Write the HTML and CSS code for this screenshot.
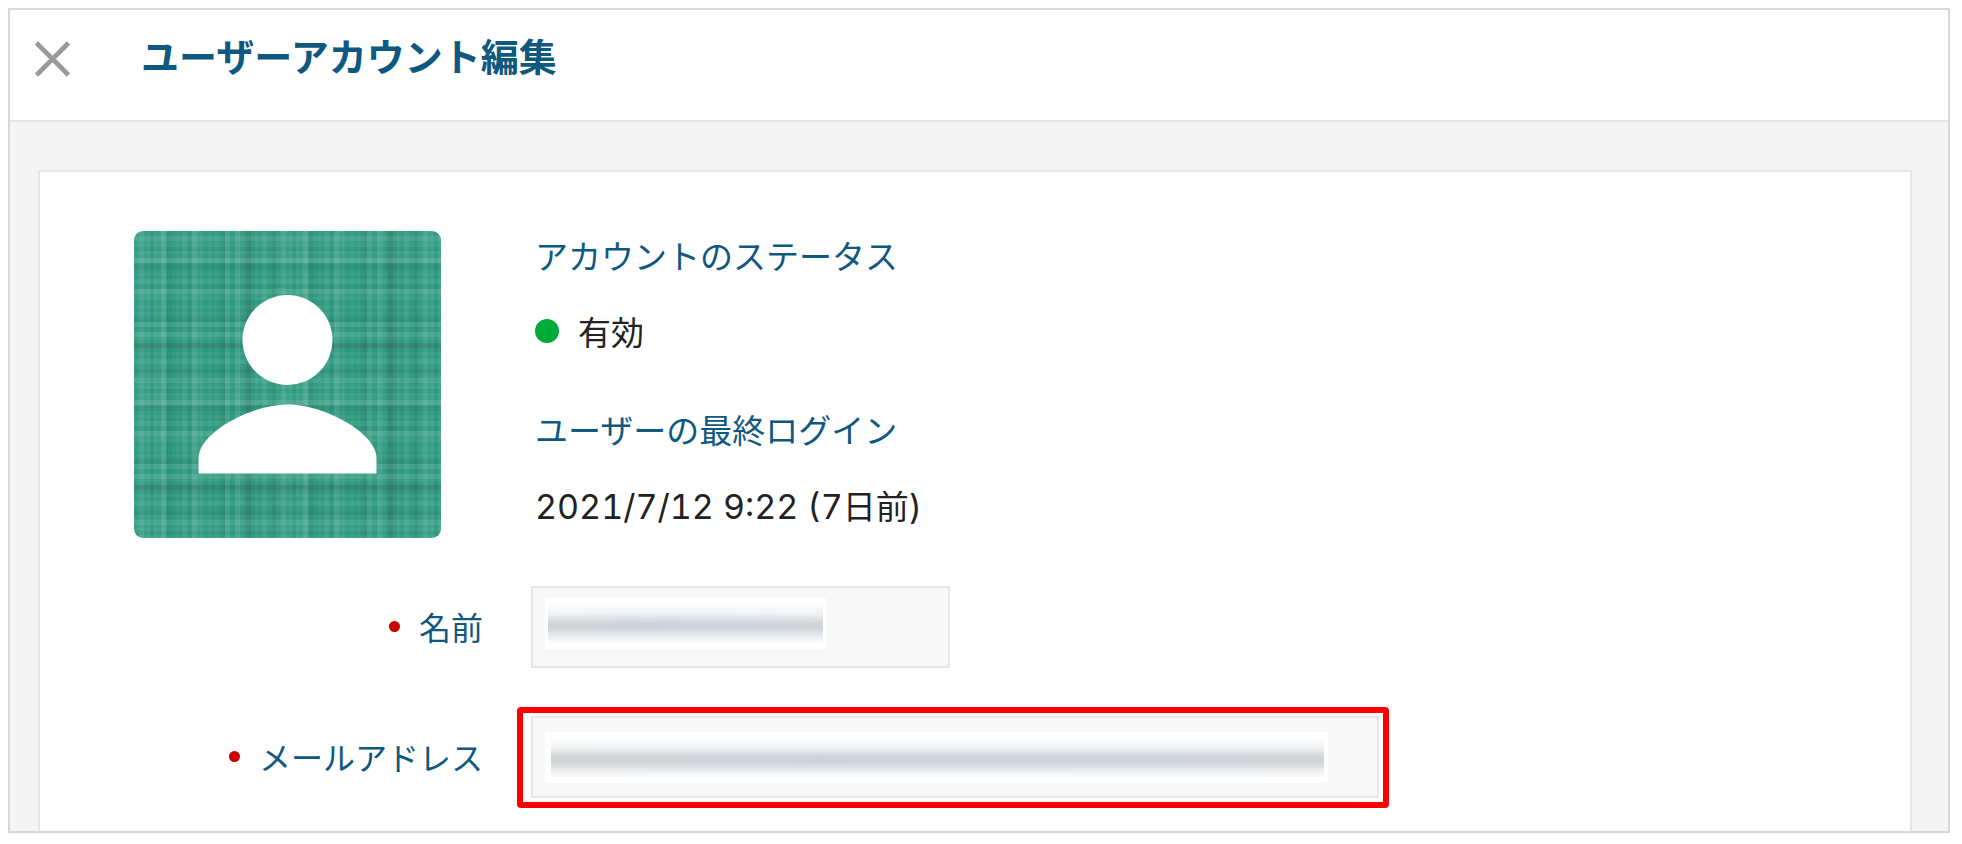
FILE: index.html
```html
<!DOCTYPE html>
<html lang="ja">
	<head>
		<meta charset="utf-8">
		<meta name="viewport" content="width=device-width, initial-scale=1">
		<title>ユーザーアカウント編集</title>
		<link rel="stylesheet" href="styles.css">
	</head>
	<body>
		<div class="dialog">
			<header class="dialog-header">
				<button class="close" type="button" aria-label="閉じる">
					<svg width="36" height="36" viewBox="0 0 36 36"><path d="M1.500 2L33.500 34M33.500 2L1.500 34" fill="none" stroke="#999" stroke-width="4.600"/></svg>
				</button>
				<h1 class="title">ユーザーアカウント編集</h1>
			</header>
			<main class="dialog-body">
				<form class="card">
					<div class="avatar">
						<svg width="307" height="307" viewBox="0 0 307 307" aria-hidden="true">
							<defs>
								<!-- one set of threads, used for both directions -->
								<g id="threads">
									<g fill="#fff">
										<rect x="0" width="5" height="142" opacity=".03"/>
										<rect x="5" width="5" height="142" opacity=".11"/>
										<rect x="10" width="3" height="142" opacity=".04"/>
										<rect x="13" width="3" height="142" opacity=".07"/>
										<rect x="20" width="3" height="142" opacity=".07"/>
										<rect x="23" width="4" height="142" opacity=".04"/>
										<rect x="27" width="5" height="142" opacity=".14"/>
										<rect x="42" width="3" height="142" opacity=".03"/>
										<rect x="48" width="5" height="142" opacity=".07"/>
										<rect x="58" width="5" height="142" opacity=".12"/>
										<rect x="63" width="3" height="142" opacity=".04"/>
										<rect x="66" width="3" height="142" opacity=".07"/>
										<rect x="74" width="4" height="142" opacity=".04"/>
										<rect x="81" width="3" height="142" opacity=".04"/>
										<rect x="91" width="5" height="142" opacity=".09"/>
										<rect x="101" width="5" height="142" opacity=".11"/>
										<rect x="106" width="3" height="142" opacity=".04"/>
										<rect x="121" width="3" height="142" opacity=".04"/>
										<rect x="128" width="5" height="142" opacity=".08"/>
									</g>
									<g fill="#3c4a48">
										<rect x="33" width="5" height="142" opacity=".1"/>
										<rect x="54" width="3" height="142" opacity=".04"/>
										<rect x="87" width="4" height="142" opacity=".1"/>
										<rect x="112" width="5" height="142" opacity=".22"/>
										<rect x="117" width="3" height="142" opacity=".05"/>
										<rect x="138" width="4" height="142" opacity=".1"/>
									</g>
								</g>
								<pattern id="plaid" width="142" height="142" patternUnits="userSpaceOnUse">
									<rect width="142" height="142" fill="#2d997f"/>
									<use href="#threads"/>
									<use href="#threads" transform="matrix(0 1 1 0 0 0)"/>
								</pattern>
							</defs>
							<rect width="307" height="307" rx="9" fill="url(#plaid)"/>
							<circle cx="153.500" cy="109" r="45" fill="#fff"/>
							<path d="M64.500 242.500V227C64.500 202 117 173.500 153.500 173.500S242.500 202 242.500 227V242.500Z" fill="#fff"/>
						</svg>
					</div>
					<dl class="info">
						<dt>アカウントのステータス</dt>
						<dd class="status"><span class="status-dot"></span>有効</dd>
						<dt>ユーザーの最終ログイン</dt>
						<dd><span class="num">2021/7/12 9:22 (7</span>日前<span class="num">)</span></dd>
					</dl>

					<label class="label required" for="name">名前</label>
					<div class="field field-name">
						<input class="input" id="name" type="text">
						<span class="masked"></span>
					</div>

					<label class="label required" for="email">メールアドレス</label>
					<div class="field field-email">
						<input class="input" id="email" type="email">
						<span class="masked"></span>
						<span class="highlight"></span>
					</div>
				</form>
			</main>
		</div>
	</body>
</html>
```
FILE: styles.css
```css
* { box-sizing: border-box; }

body {
	margin: 0;
	padding: 8px 12px 12px 8px;
	background: #fff;
	color: #222;
	font-family: "Noto Sans CJK JP", sans-serif;
	font-size: 33px;
	line-height: 48px;
}

.dialog { border: 2px solid #d8d8d8; }

/* header */
.dialog-header {
	display: flex;
	align-items: center;
	gap: 70px;
	height: 112px;
	padding: 0 25px 20px;
	border-bottom: 2px solid #e6e6e6;
}
.close {
	padding: 8px 0 0;
	border: 0;
	background: none;
	cursor: pointer;
}
.close svg { display: block; }
.title {
	margin: 0;
	color: #0f5880;
	font-size: 38px;
	font-weight: bold;
}

/* body */
.dialog-body {
	padding: 48px 36px 0 28px;
	background: #f5f5f5;
}
.card {
	display: grid;
	grid-template-columns: 349px 1fr;
	gap: 48px;
	padding: 59px 94px 33px;
	border: 2px solid #e6e6e6;
	border-bottom: 0;
	background: #fff;
}
.avatar svg { display: block; }

.info { margin: 0 0 0 4px; }
.info dt {
	color: #0f5880;
}
.info dd {
	margin: 28px 0 50px;
}
.info dd:last-child { margin-bottom: 0; }
.status {
	display: flex;
	align-items: center;
	gap: 19px;
}
.status-dot {
	width: 24px;
	height: 24px;
	border-radius: 50%;
	background: #00ac37;
}
.num {
	font-family: Inter, sans-serif;
	font-size: 34px;
	font-variant-numeric: tabular-nums;
}

/* form rows */
.label {
	display: flex;
	align-items: center;
	justify-content: flex-end;
	gap: 19px;
	padding-bottom: 2px;
	color: #0f5880;
	font-size: 32px;
}
.required::before {
	content: "";
	width: 11px;
	height: 11px;
	border-radius: 50%;
	background: #c00;
}
.field { position: relative; }
.field-name { max-width: 419px; }
.field-email { max-width: 848px; }
.input {
	display: block;
	width: 100%;
	height: 82px;
	padding: 0 16px;
	border: 2px solid #e6e6e6;
	border-radius: 0;
	background: #f8f8f8;
	color: #222;
	font: inherit;
}

/* hidden value, laid over the input */
.masked {
	position: absolute;
	top: 12px;
	left: 14px;
	width: 281px;
	height: 51px;
	border: solid #fff;
	border-width: 5px 3px;
	background:
		linear-gradient(#fff, rgba(255, 255, 255, .75) 25%, rgba(255, 255, 255, .1) 50%, rgba(255, 255, 255, .1) 60%, rgba(255, 255, 255, .7) 85%, #fff),
		linear-gradient(90deg, #cbcfd2, #c5ced6 35%, #c6cfda 65%, #cbcfd3);
	background-clip: padding-box;
}
.field-email .masked {
	top: 16px;
	width: 783px;
	border-width: 5px 4px 5px 6px;
}
.highlight {
	position: absolute;
	inset: -9px -10px -10px -14px;
	border: 6px solid #f00;
	border-radius: 4px;
	pointer-events: none;
}
```
